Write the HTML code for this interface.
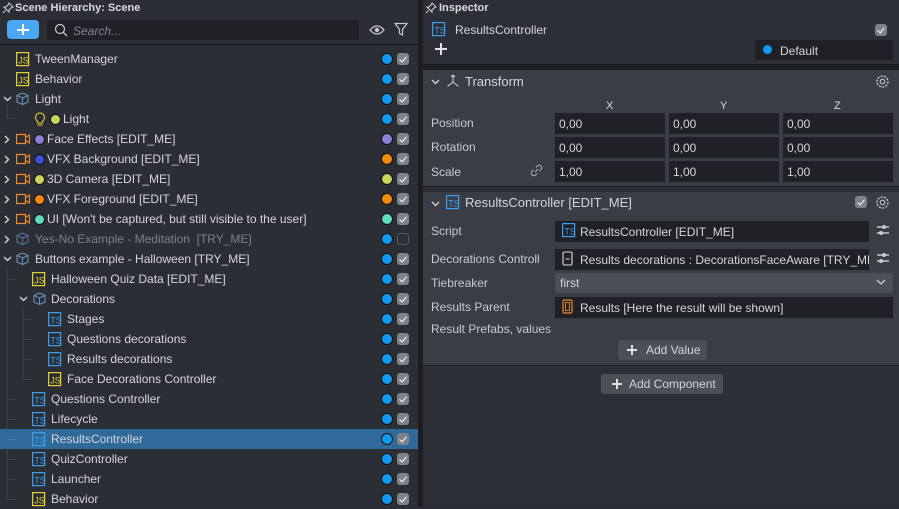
<!DOCTYPE html>
<html><head><meta charset="utf-8">
<style>
*{margin:0;padding:0;box-sizing:border-box}
body{width:899px;height:507px;overflow:hidden;background:#2b2e35;font-family:"Liberation Sans",sans-serif;font-size:12px;color:#d4d6da;position:relative}
.a{position:absolute}
.t{position:absolute;white-space:nowrap;line-height:14px}
.row{position:absolute;left:0;width:418px;height:20px}
.rd{position:absolute;left:381px;top:4px;width:12px;height:12px;border-radius:50%;border:1px solid #111}
.cb{position:absolute;left:397px;top:4px;width:12px;height:12px;border-radius:3px;background:#7d828b}
.cb:after{content:"";position:absolute;left:4px;top:1.5px;width:3px;height:6px;border:solid #fff;border-width:0 1.6px 1.6px 0;transform:rotate(40deg)}
.cb.off{background:none;border:1.5px solid #555a62}
.cb.off:after{display:none}
.ic{position:absolute;top:3px}
.dt{position:absolute;top:5px;width:11px;height:11px;border-radius:50%;border:1px solid #111}
.in{position:absolute;height:21px;background:#1f2126;color:#d4d6da;padding:4px 0 0 4px;white-space:nowrap;overflow:hidden}
.lbl{position:absolute;left:431px;color:#c8cace}
.cd{position:absolute;top:7px}
.cr{position:absolute;top:6px;left:4px}
</style></head><body>

<svg width="0" height="0" style="position:absolute">
<defs>
<g id="js"><rect x="0.6" y="0.6" width="12" height="13" fill="none" stroke="#e8cf2e" stroke-width="1.2"/><text x="2.3" y="11.5" font-size="9" font-family="Liberation Sans" fill="#e8cf2e">JS</text></g>
<g id="ts"><rect x="0.6" y="0.6" width="12" height="13" fill="none" stroke="#3d9ef0" stroke-width="1.2"/><text x="2.3" y="11.5" font-size="9" font-family="Liberation Sans" fill="#3d9ef0">TS</text></g>
<g id="cube"><path d="M6.5 1L12 3.5V10L6.5 12.5L1 10V3.5Z M1 3.5L6.5 6L12 3.5 M6.5 6V12.5" fill="none" stroke="#6a8fb5" stroke-width="1.1"/></g>
<g id="cam"><path d="M0.5 2.5H9.5V11.5H0.5Z M9.5 5.5L13.5 3V11L9.5 8.5" fill="none" stroke="#ee8a2a" stroke-width="1.2"/></g>
<path id="dn" d="M1 1L4.5 4.5L8 1" fill="none" stroke="#c8cace" stroke-width="1.5"/>
<path id="rt" d="M1 1L4.5 4.5L1 8" fill="none" stroke="#c8cace" stroke-width="1.5"/>
</defs></svg>

<!-- LEFT PANEL -->
<svg class="a" style="left:2px;top:2px" width="12" height="12" viewBox="0 0 12 12"><path d="M7 1l4 4-2 1-2 2 0 2-5-5 2 0 2-2z M3.5 8.5L1 11" fill="none" stroke="#c8cace" stroke-width="1.1"/></svg>
<div class="t" style="left:15px;top:1px;font-weight:bold;font-size:11px;color:#d8dade">Scene Hierarchy: Scene</div>
<div class="a" style="left:7px;top:20px;width:32px;height:19px;background:#4aa8f5;border-radius:4px"></div>
<div class="a" style="left:22px;top:24px;width:2px;height:11px;background:#fff"></div>
<div class="a" style="left:17px;top:29px;width:12px;height:2px;background:#fff"></div>
<div class="a" style="left:47px;top:20px;width:312px;height:20px;background:#1f2126;border-radius:2px"></div>
<svg class="a" style="left:54px;top:23px" width="14" height="14"><circle cx="6" cy="6" r="4.5" fill="none" stroke="#c8cace" stroke-width="1.2"/><path d="M9.3 9.3L13 13" stroke="#c8cace" stroke-width="1.3"/></svg>
<div class="t" style="left:73px;top:24px;font-style:italic;color:#80858d">Search...</div>
<svg class="a" style="left:369px;top:23px" width="16" height="14"><path d="M1 7Q8 -1 15 7Q8 15 1 7Z" fill="none" stroke="#c8cace" stroke-width="1.3"/><circle cx="8" cy="7" r="2.2" fill="#c8cace"/></svg>
<svg class="a" style="left:394px;top:22px" width="14" height="15"><path d="M1 1.5H13L8.5 7.5V13L5.5 11.5V7.5Z" fill="none" stroke="#c8cace" stroke-width="1.2"/></svg>
<div class="a" style="left:0;top:44px;width:418px;height:1px;background:#17181b"></div>

<!-- tree lines -->
<div class="a" style="left:7px;top:268px;width:1px;height:232px;background:#3c4048"></div>
<div class="a" style="left:23px;top:308px;width:1px;height:72px;background:#3c4048"></div>
<div class="a" style="left:7px;top:104px;width:1px;height:14px;background:#3c4048"></div>
<div class="a" style="left:7px;top:118px;width:8px;height:1px;background:#3c4048"></div>

<div class="row" style="top:429px;background:#2f6a9b"></div>

<!-- rows -->
<div class="row" style="top:49px"><svg class="ic" style="left:16px" width="14" height="15"><use href="#js"/></svg><div class="t" style="left:35px;top:3px">TweenManager</div><div class="rd" style="background:#0f9bef"></div><div class="cb"></div></div>
<div class="row" style="top:69px"><svg class="ic" style="left:16px" width="14" height="15"><use href="#js"/></svg><div class="t" style="left:35px;top:3px">Behavior</div><div class="rd" style="background:#0f9bef"></div><div class="cb"></div></div>
<div class="row" style="top:89px"><svg class="cd" style="left:3px" width="9" height="6"><use href="#dn"/></svg><svg class="ic" style="left:16px" width="14" height="15"><use href="#cube"/></svg><div class="t" style="left:35px;top:3px">Light</div><div class="rd" style="background:#0f9bef"></div><div class="cb"></div></div>
<div class="row" style="top:109px"><svg class="ic" style="left:34px" width="12" height="15"><path d="M6 1a4.5 4.5 0 0 0-2.5 8.2V11h5V9.2A4.5 4.5 0 0 0 6 1z M3.5 13h5" fill="none" stroke="#e8cf2e" stroke-width="1.1"/></svg><div class="dt" style="left:50px;background:#c8d45a"></div><div class="t" style="left:63px;top:3px">Light</div><div class="rd" style="background:#0f9bef"></div><div class="cb"></div></div>

<div class="row" style="top:129px"><svg class="cr" width="6" height="9"><use href="#rt"/></svg><svg class="ic" style="left:16px" width="14" height="15"><use href="#cam"/></svg><div class="dt" style="left:34px;background:#8a7fd6"></div><div class="t" style="left:47px;top:3px">Face Effects [EDIT_ME]</div><div class="rd" style="background:#8a7fd6"></div><div class="cb"></div></div>
<div class="row" style="top:149px"><svg class="cr" width="6" height="9"><use href="#rt"/></svg><svg class="ic" style="left:16px" width="14" height="15"><use href="#cam"/></svg><div class="dt" style="left:34px;background:#3b4fd8"></div><div class="t" style="left:47px;top:3px">VFX Background [EDIT_ME]</div><div class="rd" style="background:#f08a10"></div><div class="cb"></div></div>
<div class="row" style="top:169px"><svg class="cr" width="6" height="9"><use href="#rt"/></svg><svg class="ic" style="left:16px" width="14" height="15"><use href="#cam"/></svg><div class="dt" style="left:34px;background:#c8d45a"></div><div class="t" style="left:47px;top:3px">3D Camera [EDIT_ME]</div><div class="rd" style="background:#c8d45a"></div><div class="cb"></div></div>
<div class="row" style="top:189px"><svg class="cr" width="6" height="9"><use href="#rt"/></svg><svg class="ic" style="left:16px" width="14" height="15"><use href="#cam"/></svg><div class="dt" style="left:34px;background:#f08a10"></div><div class="t" style="left:47px;top:3px">VFX Foreground [EDIT_ME]</div><div class="rd" style="background:#f08a10"></div><div class="cb"></div></div>
<div class="row" style="top:209px"><svg class="cr" width="6" height="9"><use href="#rt"/></svg><svg class="ic" style="left:16px" width="14" height="15"><use href="#cam"/></svg><div class="dt" style="left:34px;background:#5fdcc0"></div><div class="t" style="left:47px;top:3px">UI [Won't be captured, but still visible to the user]</div><div class="rd" style="background:#5fdcc0"></div><div class="cb"></div></div>
<div class="row" style="top:229px"><svg class="cr" width="6" height="9"><use href="#rt"/></svg><svg class="ic" style="left:16px" width="14" height="15" opacity=".7"><use href="#cube"/></svg><div class="t" style="left:35px;top:3px;color:#7b8089">Yes-No Example - Meditation &nbsp;[TRY_ME]</div><div class="rd" style="background:#0f9bef"></div><div class="cb off"></div></div>
<div class="row" style="top:249px"><svg class="cd" style="left:3px" width="9" height="6"><use href="#dn"/></svg><svg class="ic" style="left:16px" width="14" height="15"><use href="#cube"/></svg><div class="t" style="left:35px;top:3px">Buttons example - Halloween [TRY_ME]</div><div class="rd" style="background:#0f9bef"></div><div class="cb"></div></div>

<div class="row" style="top:269px"><div class="a" style="left:8px;top:10px;width:8px;height:1px;background:#3c4048"></div><svg class="ic" style="left:32px" width="14" height="15"><use href="#js"/></svg><div class="t" style="left:51px;top:3px">Halloween Quiz Data [EDIT_ME]</div><div class="rd" style="background:#0f9bef"></div><div class="cb"></div></div>
<div class="row" style="top:289px"><svg class="cd" style="left:19px" width="9" height="6"><use href="#dn"/></svg><svg class="ic" style="left:33px" width="14" height="15"><use href="#cube"/></svg><div class="t" style="left:51px;top:3px">Decorations</div><div class="rd" style="background:#0f9bef"></div><div class="cb"></div></div>
<div class="row" style="top:309px"><div class="a" style="left:24px;top:10px;width:8px;height:1px;background:#3c4048"></div><svg class="ic" style="left:48px" width="14" height="15"><use href="#ts"/></svg><div class="t" style="left:67px;top:3px">Stages</div><div class="rd" style="background:#0f9bef"></div><div class="cb"></div></div>
<div class="row" style="top:329px"><div class="a" style="left:24px;top:10px;width:8px;height:1px;background:#3c4048"></div><svg class="ic" style="left:48px" width="14" height="15"><use href="#ts"/></svg><div class="t" style="left:67px;top:3px">Questions decorations</div><div class="rd" style="background:#0f9bef"></div><div class="cb"></div></div>
<div class="row" style="top:349px"><div class="a" style="left:24px;top:10px;width:8px;height:1px;background:#3c4048"></div><svg class="ic" style="left:48px" width="14" height="15"><use href="#ts"/></svg><div class="t" style="left:67px;top:3px">Results decorations</div><div class="rd" style="background:#0f9bef"></div><div class="cb"></div></div>
<div class="row" style="top:369px"><div class="a" style="left:24px;top:10px;width:8px;height:1px;background:#3c4048"></div><svg class="ic" style="left:48px" width="14" height="15"><use href="#js"/></svg><div class="t" style="left:67px;top:3px">Face Decorations Controller</div><div class="rd" style="background:#0f9bef"></div><div class="cb"></div></div>
<div class="row" style="top:389px"><div class="a" style="left:8px;top:10px;width:8px;height:1px;background:#3c4048"></div><svg class="ic" style="left:32px" width="14" height="15"><use href="#ts"/></svg><div class="t" style="left:51px;top:3px">Questions Controller</div><div class="rd" style="background:#0f9bef"></div><div class="cb"></div></div>
<div class="row" style="top:409px"><div class="a" style="left:8px;top:10px;width:8px;height:1px;background:#3c4048"></div><svg class="ic" style="left:32px" width="14" height="15"><use href="#ts"/></svg><div class="t" style="left:51px;top:3px">Lifecycle</div><div class="rd" style="background:#0f9bef"></div><div class="cb"></div></div>
<div class="row" style="top:429px"><div class="a" style="left:8px;top:10px;width:8px;height:1px;background:#4a7ea8"></div><svg class="ic" style="left:32px" width="14" height="15"><use href="#ts"/></svg><div class="t" style="left:51px;top:3px">ResultsController</div><div class="rd" style="background:#0f9bef"></div><div class="cb"></div></div>
<div class="row" style="top:449px"><div class="a" style="left:8px;top:10px;width:8px;height:1px;background:#3c4048"></div><svg class="ic" style="left:32px" width="14" height="15"><use href="#ts"/></svg><div class="t" style="left:51px;top:3px">QuizController</div><div class="rd" style="background:#0f9bef"></div><div class="cb"></div></div>
<div class="row" style="top:469px"><div class="a" style="left:8px;top:10px;width:8px;height:1px;background:#3c4048"></div><svg class="ic" style="left:32px" width="14" height="15"><use href="#ts"/></svg><div class="t" style="left:51px;top:3px">Launcher</div><div class="rd" style="background:#0f9bef"></div><div class="cb"></div></div>
<div class="row" style="top:489px"><div class="a" style="left:8px;top:10px;width:8px;height:1px;background:#3c4048"></div><svg class="ic" style="left:32px" width="14" height="15"><use href="#js"/></svg><div class="t" style="left:51px;top:3px">Behavior</div><div class="rd" style="background:#0f9bef"></div><div class="cb"></div></div>

<!-- DIVIDER -->
<div class="a" style="left:418px;top:0;width:5px;height:507px;background:#1b1d21"></div>

<!-- RIGHT PANEL -->
<div class="a" style="left:423px;top:0;width:476px;height:507px;background:#2c2f37"></div>
<svg class="a" style="left:425px;top:2px" width="12" height="12" viewBox="0 0 12 12"><path d="M7 1l4 4-2 1-2 2 0 2-5-5 2 0 2-2z M3.5 8.5L1 11" fill="none" stroke="#c8cace" stroke-width="1.1"/></svg>
<div class="t" style="left:439px;top:1px;font-weight:bold;font-size:11px;color:#d8dade">Inspector</div>
<svg class="a" style="left:432px;top:22px" width="14" height="15"><use href="#ts"/></svg>
<div class="t" style="left:455px;top:23px">ResultsController</div>
<div class="cb" style="left:875px;top:24px"></div>
<div class="a" style="left:440px;top:43px;width:2px;height:12px;background:#e0e0e0"></div>
<div class="a" style="left:435px;top:48px;width:12px;height:2px;background:#e0e0e0"></div>
<div class="a" style="left:755px;top:40px;width:138px;height:20px;background:#1f2126"></div>
<div class="a" style="left:763px;top:45px;width:9px;height:9px;border-radius:50%;background:#0f9bef"></div>
<div class="t" style="left:780px;top:44px">Default</div>
<div class="a" style="left:423px;top:64px;width:476px;height:6px;background:#1b1d21"></div>

<!-- Transform -->
<div class="a" style="left:423px;top:70px;width:476px;height:116px;background:#393d46"></div>
<svg class="a" style="left:431px;top:79px" width="9" height="6"><use href="#dn"/></svg>
<svg class="a" style="left:446px;top:74px" width="14" height="14"><path d="M7 1V8 M7 8L1.5 12.5 M7 8L12.5 12.5 M5 3L7 1L9 3" fill="none" stroke="#c8cace" stroke-width="1.1"/></svg>
<div class="t" style="left:465px;top:75px;font-size:13px">Transform</div>
<svg class="a" style="left:875px;top:74px" width="15" height="15"><circle cx="7.5" cy="7.5" r="5.5" fill="none" stroke="#c8cace" stroke-width="1.3" stroke-dasharray="2.2 1.2"/><circle cx="7.5" cy="7.5" r="2.3" fill="none" stroke="#c8cace" stroke-width="1.1"/></svg>
<div class="t" style="left:606px;top:99px;font-size:11px">X</div>
<div class="t" style="left:720px;top:99px;font-size:11px">Y</div>
<div class="t" style="left:834px;top:99px;font-size:11px">Z</div>
<div class="lbl t" style="top:116px">Position</div>
<div class="lbl t" style="top:140px">Rotation</div>
<div class="lbl t" style="top:165px">Scale</div>
<svg class="a" style="left:530px;top:164px" width="13" height="13"><path d="M5 8L8 5 M6 3.5L7.5 2a2.4 2.4 0 0 1 3.5 3.5L9.5 7 M7 9.5L5.5 11a2.4 2.4 0 0 1-3.5-3.5L3.5 6" fill="none" stroke="#aaa" stroke-width="1.1"/></svg>
<div class="in" style="left:555px;top:113px;width:110px">0,00</div>
<div class="in" style="left:669px;top:113px;width:110px">0,00</div>
<div class="in" style="left:783px;top:113px;width:110px">0,00</div>
<div class="in" style="left:555px;top:137px;width:110px">0,00</div>
<div class="in" style="left:669px;top:137px;width:110px">0,00</div>
<div class="in" style="left:783px;top:137px;width:110px">0,00</div>
<div class="in" style="left:555px;top:161px;width:110px">1,00</div>
<div class="in" style="left:669px;top:161px;width:110px">1,00</div>
<div class="in" style="left:783px;top:161px;width:110px">1,00</div>
<div class="a" style="left:423px;top:186px;width:476px;height:6px;background:#2c2f37"></div>
<div class="a" style="left:423px;top:186px;width:476px;height:1px;background:#1b1d21"></div>

<!-- ResultsController -->
<div class="a" style="left:423px;top:192px;width:476px;height:173px;background:#393d46"></div>
<svg class="a" style="left:431px;top:201px" width="9" height="6"><use href="#dn"/></svg>
<svg class="a" style="left:446px;top:195px" width="14" height="15"><use href="#ts"/></svg>
<div class="t" style="left:465px;top:196px;font-size:13px">ResultsController [EDIT_ME]</div>
<div class="cb" style="left:855px;top:196px"></div>
<svg class="a" style="left:875px;top:195px" width="15" height="15"><circle cx="7.5" cy="7.5" r="5.5" fill="none" stroke="#c8cace" stroke-width="1.3" stroke-dasharray="2.2 1.2"/><circle cx="7.5" cy="7.5" r="2.3" fill="none" stroke="#c8cace" stroke-width="1.1"/></svg>

<div class="lbl t" style="top:224px">Script</div>
<div class="in" style="left:555px;top:221px;width:314px;padding-left:25px">ResultsController [EDIT_ME]</div>
<svg class="a" style="left:562px;top:223px" width="14" height="15"><use href="#ts"/></svg>
<svg class="a" style="left:876px;top:224px" width="14" height="12"><path d="M1 3H13 M1 9H13" stroke="#c8cace" stroke-width="1.4"/><circle cx="8" cy="3" r="2" fill="#c8cace"/><circle cx="5" cy="9" r="2" fill="#c8cace"/></svg>

<div class="lbl t" style="top:252px">Decorations Controll</div>
<div class="in" style="left:555px;top:249px;width:314px;padding-left:25px">Results decorations : DecorationsFaceAware [TRY_ME</div>
<svg class="a" style="left:562px;top:251px" width="11" height="15"><rect x="1" y="1" width="9" height="13" rx="1.5" fill="none" stroke="#e0e0e0" stroke-width="1.1"/><path d="M3.5 8H7.5" stroke="#e0e0e0"/></svg>
<svg class="a" style="left:876px;top:252px" width="14" height="12"><path d="M1 3H13 M1 9H13" stroke="#c8cace" stroke-width="1.4"/><circle cx="8" cy="3" r="2" fill="#c8cace"/><circle cx="5" cy="9" r="2" fill="#c8cace"/></svg>

<div class="lbl t" style="top:276px">Tiebreaker</div>
<div class="a" style="left:555px;top:273px;width:338px;height:20px;background:#4b4f58;border-radius:3px"></div>
<div class="t" style="left:560px;top:276px">first</div>
<svg class="a" style="left:876px;top:279px" width="10" height="7"><path d="M1 1L5 5L9 1" fill="none" stroke="#c8cace" stroke-width="1.3"/></svg>

<div class="lbl t" style="top:300px">Results Parent</div>
<div class="in" style="left:555px;top:297px;width:338px;padding-left:25px">Results [Here the result will be shown]</div>
<svg class="a" style="left:562px;top:299px" width="11" height="15"><rect x="1" y="1" width="9" height="13" rx="1.5" fill="none" stroke="#ee8a2a" stroke-width="1.2"/><rect x="3.5" y="3.5" width="4" height="8" fill="none" stroke="#ee8a2a" stroke-width="0.9"/></svg>

<div class="lbl t" style="top:322px">Result Prefabs, values</div>
<div class="a" style="left:618px;top:340px;width:89px;height:20px;background:#4b4f58;border-radius:3px"></div>
<div class="a" style="left:631px;top:345px;width:2px;height:10px;background:#e0e0e0"></div>
<div class="a" style="left:627px;top:349px;width:10px;height:2px;background:#e0e0e0"></div>
<div class="t" style="left:646px;top:343px">Add Value</div>

<div class="a" style="left:423px;top:365px;width:476px;height:1px;background:#1b1d21"></div>
<div class="a" style="left:601px;top:374px;width:122px;height:20px;background:#4b4f58;border-radius:3px"></div>
<div class="a" style="left:616px;top:379px;width:2px;height:10px;background:#e0e0e0"></div>
<div class="a" style="left:612px;top:383px;width:10px;height:2px;background:#e0e0e0"></div>
<div class="t" style="left:629px;top:377px">Add Component</div>
</body></html>
